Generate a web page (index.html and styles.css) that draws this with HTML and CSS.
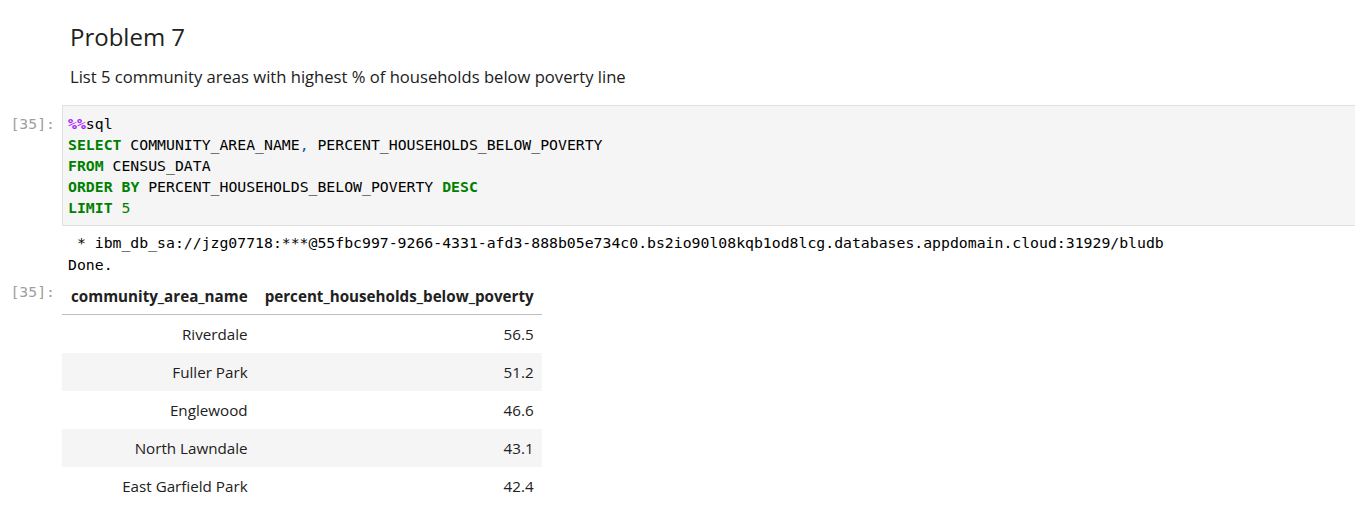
FILE: index.html
```html
<!DOCTYPE html>
<html>
<head>
<meta charset="utf-8">
<link rel="stylesheet" href="styles.css">
</head>
<body>
<div class="notebook">
  <div class="cell markdown">
    <h2 class="md-h2">Problem 7</h2>
    <p class="md-p">List 5 community areas with highest % of households below poverty line</p>
  </div>
  <div class="cell code">
    <div class="prompt">[35]:</div>
    <div class="input"><pre class="code"><span class="magic">%%</span>sql
<span class="kw">SELECT</span> COMMUNITY_AREA_NAME<span class="punct">,</span> PERCENT_HOUSEHOLDS_BELOW_POVERTY
<span class="kw">FROM</span> CENSUS_DATA
<span class="kw">ORDER</span> <span class="kw">BY</span> PERCENT_HOUSEHOLDS_BELOW_POVERTY <span class="kw">DESC</span>
<span class="kw">LIMIT</span> <span class="num">5</span></pre></div>
  </div>
  <div class="cell output">
    <div class="prompt"></div>
    <pre class="stream"> * ibm_db_sa://jzg07718:***@55fbc997-9266-4331-afd3-888b05e734c0.bs2io90l08kqb1od8lcg.databases.appdomain.cloud:31929/bludb
Done.</pre>
  </div>
  <div class="cell output result">
    <div class="prompt">[35]:</div>
    <table class="df">
      <thead>
        <tr><th>community_area_name</th><th>percent_households_below_poverty</th></tr>
      </thead>
      <tbody>
        <tr><td>Riverdale</td><td>56.5</td></tr>
        <tr><td>Fuller Park</td><td>51.2</td></tr>
        <tr><td>Englewood</td><td>46.6</td></tr>
        <tr><td>North Lawndale</td><td>43.1</td></tr>
        <tr><td>East Garfield Park</td><td>42.4</td></tr>
      </tbody>
    </table>
  </div>
</div>
</body>
</html>
```
FILE: styles.css
```css
html, body {
  margin: 0;
  padding: 0;
  background: #ffffff;
}
body {
  font-family: "Open Sans", "Noto Sans", sans-serif;
  color: #212121;
}
.notebook {
  padding-top: 18px;
}
.cell.markdown {
  padding-left: 70px;
}
.md-h2 {
  margin: 0;
  font-size: 24px;
  font-weight: 400;
  line-height: 38px;
  color: #212121;
}
.md-p {
  margin: 10px 0 0 0;
  font-size: 16.6px;
  line-height: 22px;
}
.cell.code {
  display: flex;
  margin-top: 17px;
}
.prompt {
  width: 62px;
  flex: none;
  box-sizing: border-box;
  padding-right: 7px;
  text-align: right;
  font-family: "DejaVu Sans Mono", monospace;
  font-size: 14.8px;
  color: #9e9e9e;
  line-height: 21px;
  padding-top: 8px;
}
.input {
  flex: 1;
  background: #f5f5f5;
  border: 1px solid #e0e0e0;
  border-right: none;
  padding: 7px 0 7px 5px;
}
.code, .stream {
  margin: 0;
  font-family: "DejaVu Sans Mono", monospace;
  font-size: 14.8px;
  line-height: 21px;
  color: #000;
}
.magic { color: #aa22ff; font-weight: bold; }
.kw { color: #008000; font-weight: bold; }
.punct { color: #0055aa; }
.num { color: #008000; }
.cell.output {
  display: flex;
}
.stream {
  padding: 6px 0 0 6px;
  line-height: 22px;
}
.cell.output .prompt {
  padding-top: 0;
}
.result {
  margin-top: 5px;
}
.result .prompt {
  padding-top: 6px;
}
.df {
  border-collapse: collapse;
  font-size: 15.2px;
  color: #212121;
}
.df th {
  font-weight: 700;
  text-align: right;
  padding: 5px 8px 7px 9px;
  line-height: 21px;
  border-bottom: 1px solid #bdbdbd;
}
.df th + th, .df td + td {
  padding-left: 9px;
}
.df td {
  text-align: right;
  padding: 9px 8px 8px 9px;
  line-height: 21px;
}
.df tbody tr:nth-child(even) {
  background: #f5f5f5;
}
```
